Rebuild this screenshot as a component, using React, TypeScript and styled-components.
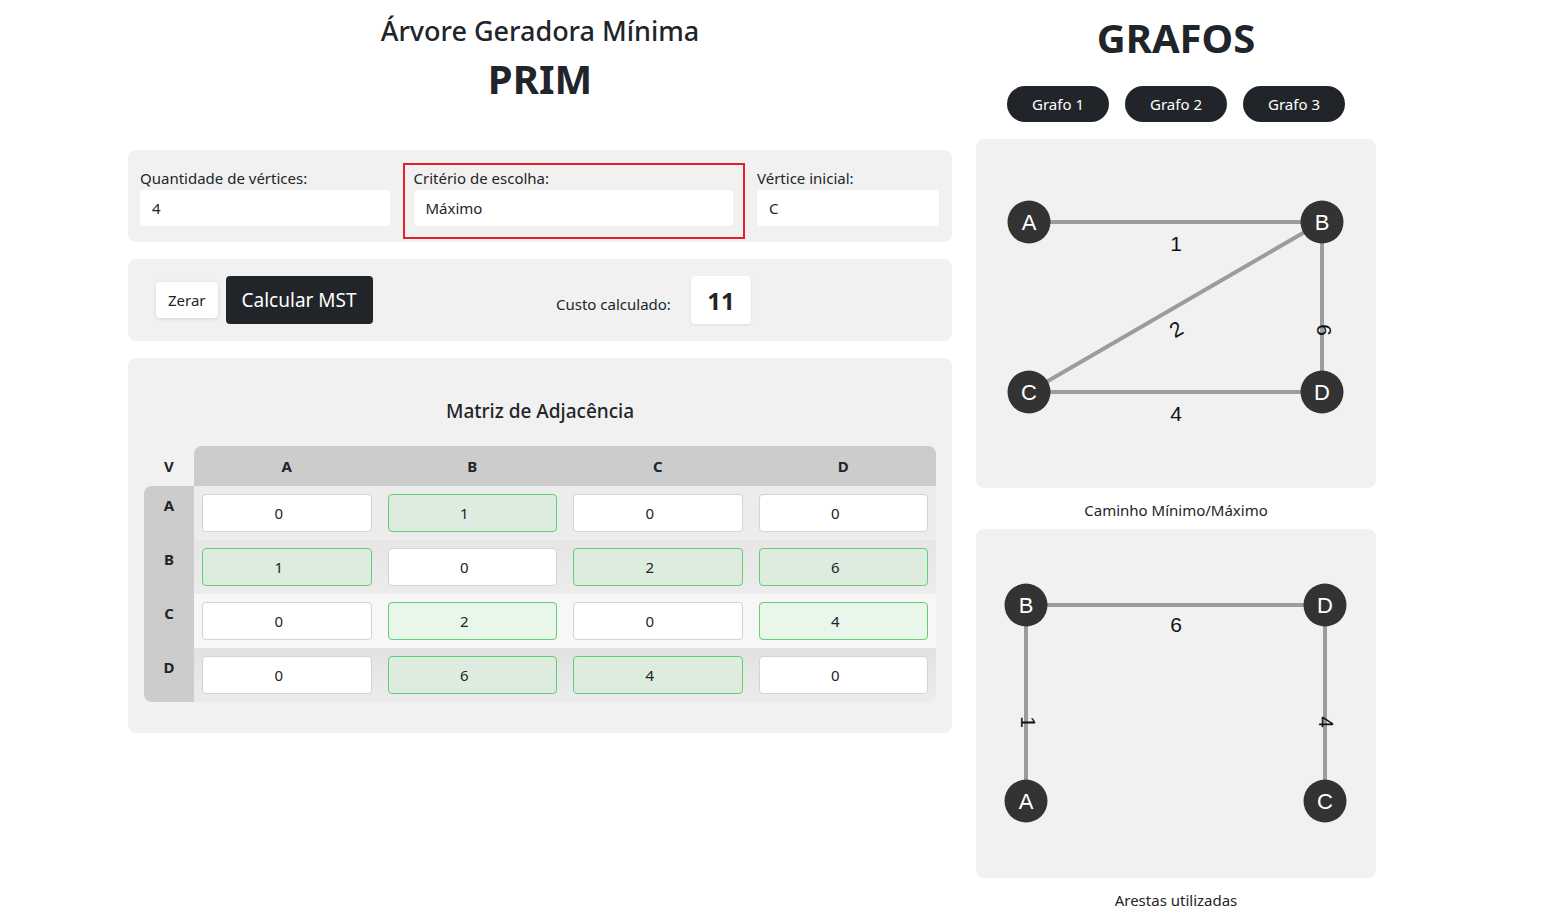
import React from "react";
import styled, { createGlobalStyle } from "styled-components";

const Global = createGlobalStyle`
  html, body { margin: 0; padding: 0; background: #fff; }
  body {
    font-family: "Noto Sans", "Open Sans", sans-serif;
    color: #212529;
  }
  * { box-sizing: border-box; }
`;

const Page = styled.div`
  display: flex;
  gap: 24px;
  padding-left: 128px;
  width: 1545px;
`;

const LeftCol = styled.div`
  width: 824px;
  display: flex;
  flex-direction: column;
`;

const RightCol = styled.div`
  width: 400px;
  display: flex;
  flex-direction: column;
  align-items: center;
`;

const Header = styled.header`
  height: 150px;
  padding-top: 13px;
  text-align: center;
`;

const Title = styled.h2`
  margin: 0;
  font-size: 27px;
  font-weight: 500;
  line-height: 36px;
`;

const BigTitle = styled.h1`
  margin: 6px 0 0;
  font-size: 40px;
  font-weight: 700;
  line-height: 48px;
`;

const Panel = styled.section<{ $mt?: number }>`
  background: #f1f1f1;
  border-radius: 8px;
  margin-top: ${(p) => p.$mt ?? 0}px;
`;

const FieldsPanel = styled(Panel)`
  display: grid;
  grid-template-columns: 250px 342px 182px;
  column-gap: 12.5px;
  padding: 13px 13px 3px 12px;
  height: 92px;
`;

const Field = styled.div<{ $boxed?: boolean }>`
  display: flex;
  flex-direction: column;
  padding: ${(p) => (p.$boxed ? "3px 10px 11px 9px" : "5px 0 0 0")};
  border: ${(p) => (p.$boxed ? "2px solid #e3202c" : "none")};
`;

const Label = styled.label`
  font-size: 15px;
  line-height: 20px;
  margin-bottom: 2px;
`;

const TextInput = styled.input`
  height: 36px;
  border: none;
  border-radius: 4px;
  background: #fff;
  padding: 0 12px;
  font-family: inherit;
  font-size: 15px;
  color: #212529;
  outline: none;
  width: 100%;
`;

const ActionsPanel = styled(Panel)`
  height: 82px;
  display: grid;
  grid-template-columns: 1fr 1fr;
  align-items: center;
`;

const ButtonGroup = styled.div`
  display: flex;
  align-items: center;
  gap: 8px;
  padding-left: 28px;
`;

const LightButton = styled.button`
  height: 36px;
  padding: 0 12px;
  background: #fff;
  border: none;
  border-radius: 4px;
  box-shadow: 0 1px 4px rgba(0, 0, 0, 0.12);
  font-family: inherit;
  font-size: 15px;
  color: #212529;
`;

const DarkButton = styled.button`
  height: 48px;
  padding: 0 16px;
  background: #212529;
  border: none;
  border-radius: 4px;
  color: #fff;
  font-family: inherit;
  font-size: 19px;
`;

const CostGroup = styled.div`
  display: flex;
  align-items: baseline;
  gap: 20px;
  padding-left: 16px;
`;

const CostLabel = styled.span`
  font-size: 15px;
`;

const CostValue = styled.div`
  width: 60px;
  height: 48px;
  background: #fff;
  border-radius: 4px;
  box-shadow: 0 1px 3px rgba(0, 0, 0, 0.08);
  display: flex;
  align-items: center;
  justify-content: center;
  font-size: 24px;
  font-weight: 700;
`;

const MatrixPanel = styled(Panel)`
  padding: 39px 16px 31px;
`;

const MatrixTitle = styled.h3`
  margin: 0 0 21px;
  text-align: center;
  font-size: 19px;
  font-weight: 500;
  line-height: 28px;
`;

const Grid = styled.div`
  display: grid;
  grid-template-columns: 50px repeat(4, 1fr);
  grid-template-rows: 40px repeat(4, 54px);
`;

const CornerCell = styled.div`
  display: flex;
  align-items: center;
  justify-content: center;
  font-weight: 700;
  font-size: 15px;
`;

const HeadCell = styled.div<{ $first?: boolean; $last?: boolean }>`
  background: #cccccc;
  display: flex;
  align-items: center;
  justify-content: center;
  font-weight: 700;
  font-size: 15px;
  border-top-left-radius: ${(p) => (p.$first ? 8 : 0)}px;
  border-top-right-radius: ${(p) => (p.$last ? 8 : 0)}px;
`;

const RowHead = styled.div<{ $first?: boolean; $last?: boolean }>`
  background: #cccccc;
  text-align: center;
  padding-top: 9px;
  font-weight: 700;
  font-size: 15px;
  line-height: 20px;
  border-top-left-radius: ${(p) => (p.$first ? 8 : 0)}px;
  border-bottom-left-radius: ${(p) => (p.$last ? 8 : 0)}px;
`;

const rowBg = ["#ececec", "linear-gradient(#e6e6e6, #ececec)", "#f7f7f7", "linear-gradient(#e2e2e2, #ececec)"];

const BodyCell = styled.div<{ $row: number; $corner?: boolean }>`
  background: ${(p) => rowBg[p.$row]};
  padding: 8px;
  border-bottom-right-radius: ${(p) => (p.$corner ? 8 : 0)}px;
`;

const CellInput = styled.input<{ $used: boolean; $light: boolean }>`
  width: 100%;
  height: 38px;
  border-radius: 4px;
  border: 1px solid ${(p) => (p.$used ? "#62cf72" : "#ced4da")};
  background: ${(p) => (p.$used ? (p.$light ? "#e9f6ea" : "#deece0") : "#fff")};
  text-align: center;
  padding: 0 16px 0 0;
  font-family: inherit;
  font-size: 15px;
  color: #212529;
  outline: none;
`;

const GraphTitle = styled.h1`
  margin: 14px 0 0;
  font-size: 40px;
  font-weight: 700;
  line-height: 48px;
`;

const PillRow = styled.div`
  display: flex;
  gap: 16px;
  margin-top: 24px;
`;

const Pill = styled.button`
  width: 102px;
  height: 36px;
  border-radius: 18px;
  background: #212529;
  color: #fff;
  border: none;
  font-family: inherit;
  font-size: 15px;
`;

const GraphBox = styled.div<{ $mt: number }>`
  width: 400px;
  height: 349px;
  background: #f1f1f1;
  border-radius: 8px;
  margin-top: ${(p) => p.$mt}px;
`;

const Caption = styled.div`
  font-size: 15px;
  line-height: 20px;
  margin-top: 12px;
`;

type Node = { id: string; x: number; y: number };
type Edge = { a: string; b: string; w: number; lx: number; ly: number; rot: number };

function Graph({ nodes, edges }: { nodes: Node[]; edges: Edge[] }) {
  const pos = (id: string) => nodes.find((n) => n.id === id)!;
  return (
    <svg width={400} height={349} viewBox="0 0 400 349">
      {edges.map((e, i) => {
        const p = pos(e.a);
        const q = pos(e.b);
        return <line key={"l" + i} x1={p.x} y1={p.y} x2={q.x} y2={q.y} stroke="#9c9c9c" strokeWidth={4} />;
      })}
      {edges.map((e, i) => (
        <text
          key={"t" + i}
          x={e.lx}
          y={e.ly}
          transform={`rotate(${e.rot} ${e.lx} ${e.ly})`}
          textAnchor="middle"
          dominantBaseline="central"
          fontFamily="'Liberation Sans', Arial, sans-serif"
          fontSize={21}
          fill="#111"
        >
          {e.w}
        </text>
      ))}
      {nodes.map((n) => (
        <g key={n.id}>
          <circle cx={n.x} cy={n.y} r={21.5} fill="#333333" />
          <text
            x={n.x}
            y={n.y}
            textAnchor="middle"
            dominantBaseline="central"
            fontFamily="'Liberation Sans', Arial, sans-serif"
            fontSize={22}
            fill="#fff"
          >
            {n.id}
          </text>
        </g>
      ))}
    </svg>
  );
}

const matrix = [
  [0, 1, 0, 0],
  [1, 0, 2, 6],
  [0, 2, 0, 4],
  [0, 6, 4, 0],
];
const letters = ["A", "B", "C", "D"];

const g1Nodes: Node[] = [
  { id: "A", x: 53, y: 83 },
  { id: "B", x: 346, y: 83 },
  { id: "C", x: 53, y: 253 },
  { id: "D", x: 346, y: 253 },
];
const g1Edges: Edge[] = [
  { a: "A", b: "B", w: 1, lx: 200, ly: 104, rot: 0 },
  { a: "B", b: "C", w: 2, lx: 200, ly: 190, rot: -30 },
  { a: "B", b: "D", w: 6, lx: 348, ly: 191, rot: 90 },
  { a: "C", b: "D", w: 4, lx: 200, ly: 274, rot: 0 },
];
const g2Nodes: Node[] = [
  { id: "B", x: 50, y: 76 },
  { id: "D", x: 349, y: 76 },
  { id: "A", x: 50, y: 272 },
  { id: "C", x: 349, y: 272 },
];
const g2Edges: Edge[] = [
  { a: "B", b: "D", w: 6, lx: 200, ly: 95, rot: 0 },
  { a: "B", b: "A", w: 1, lx: 52, ly: 193, rot: 90 },
  { a: "D", b: "C", w: 4, lx: 350, ly: 193, rot: 90 },
];

export default function App() {
  return (
    <>
      <Global />
      <Page>
        <LeftCol>
          <Header>
            <Title>Árvore Geradora Mínima</Title>
            <BigTitle>PRIM</BigTitle>
          </Header>

          <FieldsPanel>
            <Field>
              <Label>Quantidade de vértices:</Label>
              <TextInput value="4" readOnly />
            </Field>
            <Field $boxed>
              <Label>Critério de escolha:</Label>
              <TextInput value="Máximo" readOnly />
            </Field>
            <Field>
              <Label>Vértice inicial:</Label>
              <TextInput value="C" readOnly />
            </Field>
          </FieldsPanel>

          <ActionsPanel $mt={17}>
            <ButtonGroup>
              <LightButton>Zerar</LightButton>
              <DarkButton>Calcular MST</DarkButton>
            </ButtonGroup>
            <CostGroup>
              <CostLabel>Custo calculado:</CostLabel>
              <CostValue>11</CostValue>
            </CostGroup>
          </ActionsPanel>

          <MatrixPanel $mt={17}>
            <MatrixTitle>Matriz de Adjacência</MatrixTitle>
            <Grid>
              <CornerCell>V</CornerCell>
              {letters.map((l, i) => (
                <HeadCell key={l} $first={i === 0} $last={i === 3}>
                  {l}
                </HeadCell>
              ))}
              {matrix.map((row, r) => (
                <React.Fragment key={r}>
                  <RowHead $first={r === 0} $last={r === 3}>
                    {letters[r]}
                  </RowHead>
                  {row.map((v, c) => (
                    <BodyCell key={c} $row={r} $corner={r === 3 && c === 3}>
                      <CellInput value={String(v)} readOnly $used={v !== 0} $light={r === 2} />
                    </BodyCell>
                  ))}
                </React.Fragment>
              ))}
            </Grid>
          </MatrixPanel>
        </LeftCol>

        <RightCol>
          <GraphTitle>GRAFOS</GraphTitle>
          <PillRow>
            <Pill>Grafo 1</Pill>
            <Pill>Grafo 2</Pill>
            <Pill>Grafo 3</Pill>
          </PillRow>
          <GraphBox $mt={17}>
            <Graph nodes={g1Nodes} edges={g1Edges} />
          </GraphBox>
          <Caption>Caminho Mínimo/Máximo</Caption>
          <GraphBox $mt={9}>
            <Graph nodes={g2Nodes} edges={g2Edges} />
          </GraphBox>
          <Caption>Arestas utilizadas</Caption>
        </RightCol>
      </Page>
    </>
  );
}
